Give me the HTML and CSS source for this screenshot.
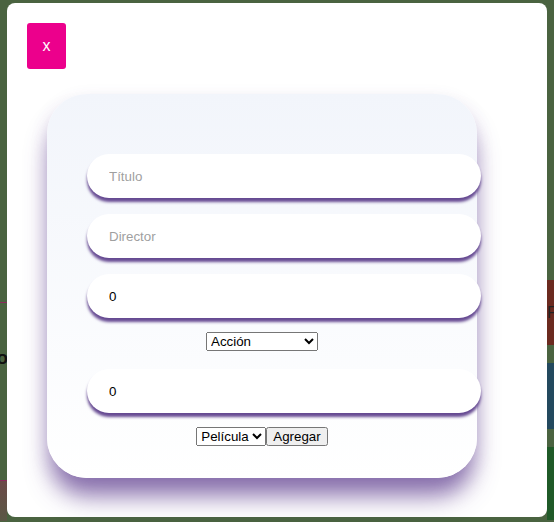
FILE: index.html
```html
<!DOCTYPE html>
<html lang="es">
<head>
<meta charset="utf-8">
<title>Agregar</title>
<link rel="stylesheet" href="styles.css">
</head>
<body>
<div class="page">
  <div class="left-col">
    <div class="left-card"><span class="left-text">Catálogo</span></div>
    <div class="left-card2"></div>
  </div>
  <div class="right-col">
    <div class="tile tile-red">Filtrar</div>
    <div class="tile tile-blue"></div>
    <div class="tile tile-green"></div>
  </div>
</div>

<div class="modal">
  <button class="close-btn" type="button">x</button>
  <form class="card">
    <input class="field" type="text" placeholder="Título">
    <input class="field" type="text" placeholder="Director">
    <input class="field" type="number" value="0">
    <div class="row row-genre">
      <select class="genre">
        <option>Acción</option>
        <option>Comedia</option>
        <option>Drama</option>
        <option>Ciencia ficción</option>
        <option>Terror</option>
      </select>
    </div>
    <input class="field field-last" type="number" value="0">
    <div class="row row-submit">
      <select class="kind">
        <option>Película</option>
        <option>Serie</option>
      </select><button class="add-btn" type="button">Agregar</button>
    </div>
  </form>
</div>
</body>
</html>
```

FILE: styles.css
```css
html, body {
  margin: 0;
  padding: 0;
}
body {
  background: #4a6340;
  font-family: "Liberation Sans", Arial, sans-serif;
  width: 554px;
  height: 522px;
  overflow: hidden;
}
.page {
  display: flex;
  justify-content: space-between;
  height: 522px;
}
.left-col {
  width: 7px;
  padding-top: 302px;
  overflow: hidden;
  display: flex;
  flex-direction: column;
  align-items: flex-end;
}
.left-card {
  width: 120px;
  flex-shrink: 0;
  height: 179px;
  border-top: 1px solid #8a2a5c;
  border-bottom: 1px solid #8a2a5c;
  text-align: right;
  padding-top: 44px;
  box-sizing: border-box;
}
.left-text {
  font-weight: bold;
  font-size: 19px;
  color: #111;
  margin-right: -1px;
}
.left-card2 {
  width: 120px;
  flex-shrink: 0;
  height: 40px;
  background: linear-gradient(#6b4a48, #5a5845);
}
.right-col {
  width: 7px;
  padding-top: 280px;
  overflow: hidden;
  display: flex;
  flex-direction: column;
  gap: 18px;
}
.tile {
  width: 120px;
  flex-shrink: 0;
  font-size: 16px;
  color: #222;
  box-sizing: border-box;
  padding-top: 24px;
}
.tile-red { height: 65px; background: #6b2a1f; }
.tile-blue { height: 66px; background: #23495e; }
.tile-green { height: 73px; background: #1f5a28; }

.modal {
  position: fixed;
  top: 3px;
  left: 7px;
  width: 540px;
  height: 514px;
  background: #fff;
  border-radius: 8px;
  box-sizing: border-box;
  padding: 20px 0 0 20px;
}
.close-btn {
  display: flex;
  align-items: center;
  justify-content: center;
  width: 39px;
  height: 46px;
  padding: 0;
  border: none;
  border-radius: 3px;
  background: #ec008c;
  color: #fff;
  font-family: "Liberation Sans", Arial, sans-serif;
  font-size: 16px;
}
.card {
  margin: 25px 0 0 20px;
  width: 430px;
  box-sizing: border-box;
  padding: 60px 40px 32px;
  border-radius: 40px;
  background: linear-gradient(#f2f5fb, #ffffff);
  box-shadow: 0 22px 24px -4px rgba(90, 55, 140, 0.7), 0 6px 18px rgba(90, 55, 140, 0.12);
}
.field {
  display: block;
  box-sizing: content-box;
  width: 100%;
  height: 44px;
  padding: 0 22px;
  margin: 0 0 16px 0;
  border: none;
  outline: none;
  border-radius: 22px;
  background: #fff;
  box-shadow: 0 4px 3px #664a92;
  font-family: "Liberation Sans", Arial, sans-serif;
  font-size: 13.33px;
  color: #000;
}
.field::placeholder {
  color: #9f9f9f;
}
.field-last {
  margin-bottom: 0;
}
.row {
  display: flex;
  justify-content: center;
  align-items: flex-start;
}
.row-genre {
  margin: -2px 0 18px;
}
.row-submit {
  margin-top: 14px;
}
select, .add-btn {
  font-family: "Liberation Sans", Arial, sans-serif;
  font-size: 13.33px;
}
.genre {
  width: 112px;
  height: 19px;
}
.kind {
  width: 70px;
  height: 19px;
}
.add-btn {
  height: 19px;
  padding: 0 5px;
}
```
